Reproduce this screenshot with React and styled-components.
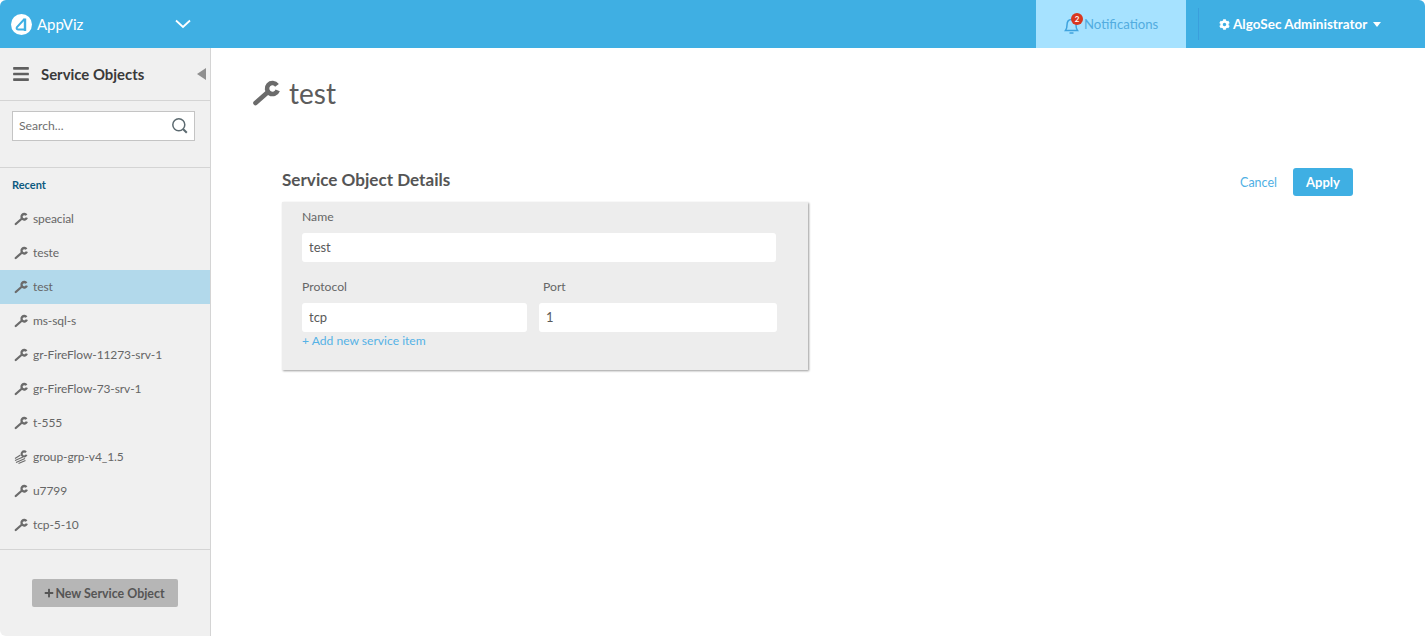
import React from 'react';
import styled, { createGlobalStyle } from 'styled-components';
import { FaCog, FaPlus, FaBars } from 'react-icons/fa';

const GlobalStyle = createGlobalStyle`
  html, body {
    margin: 0;
    height: 100%;
    background: white;
  }
  body {
    font-family: "Lato", "Open Sans", sans-serif;
    color: #5a5a5a;
  }
  * { box-sizing: border-box; }
`;

const Page = styled.div`
  width: 1425px;
  height: 636px;
  display: flex;
  flex-direction: column;
  overflow: hidden;
`;

const TopBar = styled.header`
  height: 48px;
  flex: none;
  display: flex;
  align-items: stretch;
  background: #3fafe3;
  border-radius: 6px 6px 0 0;
  color: white;
`;

const Brand = styled.div`
  width: 175px;
  display: flex;
  align-items: center;
  gap: 5px;
  padding-left: 11px;
  font-size: 15px;
`;

const Spread = styled.div`
  flex: 1;
  display: flex;
  align-items: center;
`;

const NotificationTab = styled.div`
  width: 150px;
  margin-left: auto;
  background: #a6e2ff;
  color: #52ace0;
  font-size: 13.2px;
  display: flex;
  align-items: center;
  padding-left: 28px;
`;

const BellWrap = styled.span`
  position: relative;
  display: flex;
  width: 20px;
  padding-top: 2px;
`;

const Badge = styled.span`
  position: absolute;
  top: -2px;
  left: 7px;
  width: 12px;
  height: 12px;
  border-radius: 50%;
  background: #d9371f;
  color: white;
  font-size: 8px;
  font-weight: 700;
  line-height: 12px;
  text-align: center;
`;

const UserArea = styled.div`
  width: 239px;
  padding: 8px 0 8px 12px;
  display: flex;
`;

const UserMenu = styled.div`
  flex: 1;
  border-left: 1px solid #3a9fdc;
  display: flex;
  align-items: center;
  gap: 3px;
  padding-left: 20px;
  font-size: 13.5px;
  font-weight: 700;
`;

const CaretDown = styled.span`
  width: 0;
  height: 0;
  margin-left: 3px;
  border-left: 4px solid transparent;
  border-right: 4px solid transparent;
  border-top: 5px solid white;
`;

const Body = styled.div`
  flex: 1;
  display: flex;
  min-height: 0;
`;

const Sidebar = styled.aside`
  width: 211px;
  flex: none;
  background: #f0f0f0;
  border-right: 1px solid #d4d4d4;
  border-radius: 0 0 0 6px;
  display: flex;
  flex-direction: column;
`;

const SideHeader = styled.div`
  height: 53px;
  border-bottom: 1px solid #d4d4d4;
  display: flex;
  align-items: center;
  padding: 0 4px 0 12px;
  color: #5f5f5f;
`;

const SideTitle = styled.span`
  flex: 1;
  margin-left: 11px;
  font-size: 14.9px;
  font-weight: 700;
  color: #3a3a3a;
`;

const CollapseArrow = styled.span`
  width: 0;
  height: 0;
  border-top: 6px solid transparent;
  border-bottom: 6px solid transparent;
  border-right: 9px solid #8f8f8f;
`;

const SearchArea = styled.div`
  height: 67px;
  padding: 10px 15px 0 12px;
  border-bottom: 1px solid #d4d4d4;
`;

const SearchBox = styled.div`
  height: 30px;
  background: white;
  border: 1px solid #c4c4c4;
  display: flex;
  align-items: center;
  justify-content: space-between;
  padding: 0 6px 2px;
  font-size: 12.2px;
  color: #6f6f6f;
`;

const SectionLabel = styled.div`
  margin: 10px 0 0 12px;
  height: 24px;
  font-size: 11px;
  font-weight: 700;
  line-height: 13px;
  color: #0b5a80;
`;

const ItemList = styled.div`
  height: 348px;
  border-bottom: 1px solid #d4d4d4;
`;

const Item = styled.div`
  height: 34px;
  display: flex;
  align-items: center;
  gap: 5px;
  padding: 0 0 1px 14px;
  font-size: 12px;
  letter-spacing: -0.1px;
  color: #666;
  background: ${props => props.active ? '#b2d9eb' : 'transparent'};
`;

const SideFooter = styled.div`
  padding-top: 29px;
  display: flex;
  justify-content: center;
`;

const NewButton = styled.div`
  width: 146px;
  height: 28px;
  margin-right: 1px;
  border-radius: 2px;
  background: #b6b6b6;
  color: #555;
  font-size: 12.4px;
  font-weight: 700;
  display: flex;
  align-items: center;
  justify-content: center;
  gap: 1px;
`;

const Main = styled.main`
  flex: 1;
  padding: 23px 72px 0 41px;
`;

const PageTitle = styled.h1`
  margin: 0;
  height: 43px;
  display: flex;
  align-items: center;
  gap: 9px;
  font-size: 28px;
  line-height: 40px;
  font-weight: 400;
  color: #5c5c5c;
`;

const DetailsHead = styled.div`
  margin: 54px 0 0 30px;
  height: 36px;
  display: flex;
  align-items: flex-start;
  justify-content: space-between;
`;

const DetailsTitle = styled.h2`
  margin: 1px 0 0;
  font-size: 17.1px;
  font-weight: 700;
  line-height: 22px;
  color: #555;
`;

const Actions = styled.div`
  display: flex;
  align-items: center;
  gap: 16px;
`;

const CancelLink = styled.span`
  font-size: 12.5px;
  color: #4fb0e4;
`;

const ApplyButton = styled.div`
  width: 60px;
  height: 28px;
  border-radius: 3px;
  background: #3fafe3;
  color: white;
  font-size: 13px;
  font-weight: 700;
  display: flex;
  align-items: center;
  justify-content: center;
`;

const Panel = styled.section`
  width: 526px;
  height: 168px;
  margin: -2px 0 0 30px;
  padding: 7px 31px 0 20px;
  background: #ededed;
  box-shadow: 1px 1px 2px #9c9c9c;
`;

const FieldRow = styled.div`
  display: grid;
  grid-template-columns: ${props => props.columns || '1fr'};
  column-gap: 12px;
  margin-bottom: ${props => props.gap || 0}px;
`;

const Label = styled.label`
  display: block;
  height: 24px;
  padding-left: ${props => props.indent || 0}px;
  font-size: 12.2px;
  line-height: 16px;
  color: #666;
`;

const Input = styled.div`
  height: 29px;
  background: white;
  border-radius: 3px;
  padding-left: 7px;
  font-size: 13px;
  line-height: 29px;
  color: #5a5a5a;
`;

const AddLink = styled.div`
  font-size: 12.1px;
  line-height: 17px;
  color: #55b2e6;
`;

const Wrench = ({ size = 14 }) => (
  <svg width={size} height={size} viewBox="0 0 28 28" fill="none" stroke="#6b6b6b">
    <path d="M25 6.300A5.500 5.500 0 1 0 25.700 11.400" strokeWidth="4.600" />
    <path d="M3.500 24 16 13" strokeWidth="4.600" strokeLinecap="round" />
  </svg>
);

const WrenchGroup = () => (
  <svg width="14" height="14" viewBox="0 0 28 28" fill="none" stroke="#6b6b6b">
    <path d="M24 4.500A5 5 0 1 0 25 9.500" strokeWidth="4.200" />
    <path d="M2 17 13 10M2 21 18 14M4 25 22 17M9 27 23 21" strokeWidth="2.200" />
  </svg>
);

const Bell = () => (
  <svg width="15" height="17" viewBox="0 0 15 17" fill="none" stroke="#3fa3de" strokeWidth="1.500">
    <path d="M1.500 13.500c1.200-1.500 1.500-3 1.500-5.500C3 4.500 5 2.500 7.500 2.500S12 4.500 12 8c0 2.500.3 4 1.500 5.500z" />
    <path d="M5.500 16h4" />
  </svg>
);

const Logo = () => (
  <svg width="21" height="21" viewBox="0 0 21 21" fill="none">
    <circle cx="10.500" cy="10.500" r="10.500" fill="white" />
    <path d="M13.500 5 6 13c-1 1.500 0 2.500 1.500 2.500H13" stroke="#3fafe3" strokeWidth="2" />
    <path d="M14 4.500V17" stroke="#3fafe3" strokeWidth="2.400" />
  </svg>
);

const Chevron = () => (
  <svg width="16" height="10" viewBox="0 0 16 10" fill="none" stroke="white" strokeWidth="1.800">
    <path d="M1 1.500 8 8l7-6.500" />
  </svg>
);

const SearchIcon = () => (
  <svg width="17" height="17" viewBox="0 0 17 17" fill="none" stroke="#5c6a70" strokeWidth="1.500">
    <circle cx="7.800" cy="7.800" r="6" />
    <path d="M12 12l3.800 3.800" strokeWidth="2" />
  </svg>
);

const items = [
  { name: 'speacial' },
  { name: 'teste' },
  { name: 'test', active: true },
  { name: 'ms-sql-s' },
  { name: 'gr-FireFlow-11273-srv-1' },
  { name: 'gr-FireFlow-73-srv-1' },
  { name: 't-555' },
  { name: 'group-grp-v4_1.5', group: true },
  { name: 'u7799' },
  { name: 'tcp-5-10' },
];

export default function App() {
  return (
    <Page>
      <GlobalStyle />
      <TopBar>
        <Brand>
          <Logo />
          AppViz
        </Brand>
        <Spread>
          <Chevron />
        </Spread>
        <NotificationTab>
          <BellWrap>
            <Bell />
            <Badge>2</Badge>
          </BellWrap>
          Notifications
        </NotificationTab>
        <UserArea>
          <UserMenu>
            <FaCog size={11} />
            AlgoSec Administrator
            <CaretDown />
          </UserMenu>
        </UserArea>
      </TopBar>
      <Body>
        <Sidebar>
          <SideHeader>
            <FaBars size={18} />
            <SideTitle>Service Objects</SideTitle>
            <CollapseArrow />
          </SideHeader>
          <SearchArea>
            <SearchBox>
              Search...
              <SearchIcon />
            </SearchBox>
          </SearchArea>
          <SectionLabel>Recent</SectionLabel>
          <ItemList>
            {items.map(item => (
              <Item key={item.name} active={item.active}>
                {item.group ? <WrenchGroup /> : <Wrench />}
                {item.name}
              </Item>
            ))}
          </ItemList>
          <SideFooter>
            <NewButton>
              <FaPlus size={10} />
              New Service Object
            </NewButton>
          </SideFooter>
        </Sidebar>
        <Main>
          <PageTitle>
            <Wrench size={28} />
            test
          </PageTitle>
          <DetailsHead>
            <DetailsTitle>Service Object Details</DetailsTitle>
            <Actions>
              <CancelLink>Cancel</CancelLink>
              <ApplyButton>Apply</ApplyButton>
            </Actions>
          </DetailsHead>
          <Panel>
            <Label>Name</Label>
            <FieldRow columns="474px" gap={17}>
              <Input>test</Input>
            </FieldRow>
            <FieldRow columns="225px 238px">
              <Label>Protocol</Label>
              <Label indent={4}>Port</Label>
            </FieldRow>
            <FieldRow columns="225px 238px">
              <Input>tcp</Input>
              <Input>1</Input>
            </FieldRow>
            <AddLink>+ Add new service item</AddLink>
          </Panel>
        </Main>
      </Body>
    </Page>
  );
}
